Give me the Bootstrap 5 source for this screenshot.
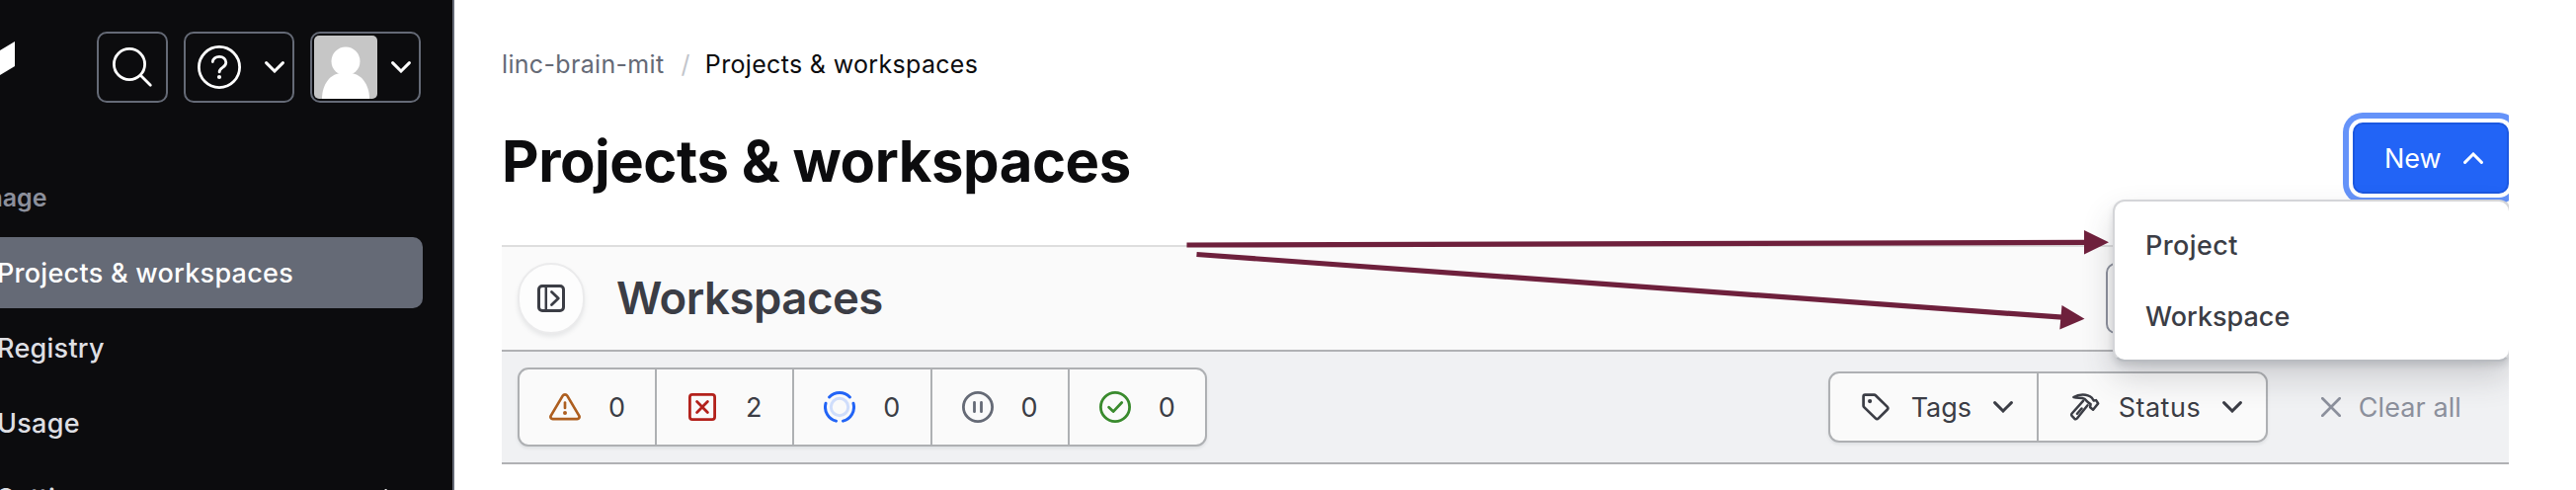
<!DOCTYPE html>
<html lang="en" data-bs-theme="light">
<head>
<meta charset="utf-8">
<title>Projects &amp; workspaces</title>
<link href="https://cdn.jsdelivr.net/npm/bootstrap@5.3.0/dist/css/bootstrap.min.css" rel="stylesheet">
<style>
  body { font-family: Inter, "Liberation Sans", sans-serif; font-size: 27px; line-height: 40px; color: #3b3d45; background: #fff; width: 2608px; height: 496px; overflow: hidden; }
  svg { display: block; flex: none; }
  .side { width: 460px; height: 496px; background: #0c0c0e; border-right: 2px solid #656a76; overflow: hidden; }
  .side-top { padding: 32px 32px 0 0; gap: 16px; }
  .side-btn { height: 72px; border: 2px solid #656a76; border-radius: 10px; color: #fff; }
  .side-label { margin: 76px 0 19px -50px; color: #8c909c; font-size: 25px; font-weight: 600; height: 41px; }
  .side-nav { gap: 4px; padding-right: 30px; }
  .side-item { height: 72px; color: #dedfe3; font-weight: 500; letter-spacing: .27px; border-radius: 0 10px 10px 0; }
  .side-item span { margin-left: -3px; padding-top: 1px; }
  .side-item.current { background: #656a76; color: #fff; }
  .page { width: 2032px; margin-left: 48px; height: 496px; overflow: hidden; }
  .crumbs { height: 40px; margin: 45px 0 0; font-size: 25px; letter-spacing: .33px; color: #0c0c0e; }
  .crumbs a { color: #656a76; text-decoration: none; }
  .crumbs i { color: #c2c5cb; font-style: normal; margin: 0 15px 0 17px; }
  .head-row { height: 72px; margin-top: 39px; }
  .head-row h1 { font-size: 58px; font-weight: 700; letter-spacing: -.45px; color: #0c0c0e; line-height: 72px; margin: 3px 0 0; }
  .new-btn { width: 158px; height: 72px; background: #2264f6; border: 2px solid #1c58e0; border-radius: 10px; color: #fff; padding: 0 24px 0 30px; box-shadow: 0 0 0 4px #fff, 0 0 0 10px #6593f9; }
  .new-btn span { padding-top: 1px; }
  .menu { top: 78px; right: -2px; width: 403px; height: 164px; background: #fff; border: 2px solid #d4d5d8; border-bottom-color: #b9bcc1; border-radius: 12px; padding: 8px 0; box-shadow: 0 4px 6px rgba(59,61,69,.14), 0 16px 32px rgba(59,61,69,.2); z-index: 3; font-weight: 500; }
  .menu a { height: 72px; padding: 2px 0 0 31px; color: #3b3d45; text-decoration: none; }
  .title-bar { margin-top: 52px; height: 106px; background: #fafafa; border-top: 2px solid #dedede; padding-left: 16px; }
  .title-bar h2 { font-size: 45.5px; font-weight: 600; letter-spacing: -.5px; margin: -1px 0 0 32px; line-height: 56px; }
  .round-btn { width: 68px; height: 72px; border: 2px solid #ebebec; border-radius: 36px; background: #fdfdfd; box-shadow: 0 3px 4px rgba(101,106,118,.12); }
  .ghost-btn { width: 390px; height: 72px; border: 2px solid #8c909c; border-radius: 10px; background: #fafafa; margin-right: 18px; }
  .filters { height: 116px; background: #f0f1f3; border-top: 2px solid #b0b1b4; border-bottom: 2px solid #b0b1b4; padding: 0 48px 0 16px; }
  .filters span { padding-top: 1px; }
  .segs { border: 2px solid #aeb0b3; border-radius: 11px; background: #fafafa; box-shadow: 0 2px 3px rgba(101,106,118,.12); }
  .segs > div + div { border-left: 2px solid #aeb0b3; }
  .states { width: 698px; height: 80px; }
  .states > div { flex: 0 0 137px; padding-left: 30px; gap: 28px; }
  .states > div + div { flex: 1 1 0; }
  .drops { height: 72px; }
  .clear-all { color: #8c909c; margin-left: 54px; gap: 18px; letter-spacing: .1px; }
  .arrows { left: 0; top: 0; z-index: 5; pointer-events: none; }
</style>
</head>
<body class="d-flex position-relative">
<svg width="0" height="0" class="position-absolute"><defs>
  <symbol id="chev" viewBox="0 0 20 12"><path d="M1.6 1.6 10 10 18.4 1.6" fill="none" stroke="currentColor" stroke-width="3" stroke-linecap="round"/></symbol>
</defs></svg>

<aside class="side flex-shrink-0 d-flex flex-column">
  <div class="side-top d-flex align-items-center flex-shrink-0">
    <svg width="15" height="54" viewBox="0 0 15 54" class="me-auto"><path d="M0 10 15 1V26L0 35Z" fill="#fff"/></svg>
    <div class="side-btn d-flex align-items-center justify-content-center" style="width:72px">
      <svg width="42" height="42" viewBox="0 0 42 42" fill="none" stroke="#fff" stroke-width="2.8" stroke-linecap="round"><circle cx="18" cy="18" r="15.6"/><path d="m29.3 29.3 10 10"/></svg>
    </div>
    <div class="side-btn d-flex align-items-center" style="width:112px">
      <svg style="margin-left:12px" width="44" height="44" viewBox="0 0 44 44" fill="none" stroke="#fff" stroke-width="2.8" stroke-linecap="round"><circle cx="22" cy="22" r="20.6"/><path d="M15.300 16.600c0-3 3-5.300 6.800-5.300s6.700 2.700 6.700 6c0 5.600-6.700 4.600-6.700 9.600"/><circle cx="22" cy="32" r="2.100" fill="#fff" stroke="none"/></svg>
      <svg width="20" height="12" class="ms-4"><use href="#chev"/></svg>
    </div>
    <div class="side-btn d-flex align-items-center" style="width:112px">
      <svg style="margin-left:2px" width="64" height="64" viewBox="0 0 64 64"><defs><clipPath id="av"><rect width="64" height="64" rx="5"/></clipPath></defs><g clip-path="url(#av)"><rect width="64" height="64" fill="#c6c6c6"/><circle cx="32" cy="26" r="14.500" fill="#fff"/><path d="M8 64C8 49 17 38.500 26 38.500h12C47 38.500 56 49 56 64Z" fill="#fff"/></g></svg>
      <svg width="20" height="12" style="margin-left:14px"><use href="#chev"/></svg>
    </div>
  </div>
  <div class="side-label flex-shrink-0">Manage</div>
  <nav class="side-nav d-flex flex-column">
    <div class="side-item current d-flex align-items-center"><span>Projects &amp; workspaces</span></div>
    <div class="side-item d-flex align-items-center"><span>Registry</span></div>
    <div class="side-item d-flex align-items-center"><span>Usage</span></div>
    <div class="side-item d-flex align-items-center justify-content-between"><span>Settings</span><svg width="12" height="20" viewBox="0 0 12 20" style="margin-right:27px;margin-top:1px"><path d="m1.600 1.600 8.400 8.400-8.400 8.400" fill="none" stroke="#fff" stroke-width="3" stroke-linecap="round"/></svg></div>
  </nav>
</aside>

<main class="page">
  <div class="crumbs d-flex align-items-center"><a href="#">linc-brain-mit</a><i>/</i><span>Projects &amp; workspaces</span></div>
  <div class="head-row d-flex justify-content-between position-relative">
    <h1>Projects &amp; workspaces</h1>
    <div class="new-btn d-flex align-items-center justify-content-between"><span>New</span><svg width="20" height="12" style="transform:rotate(180deg)"><use href="#chev"/></svg></div>
    <div class="menu position-absolute">
      <a href="#" class="d-flex align-items-center" style="letter-spacing:.4px">Project</a>
      <a href="#" class="d-flex align-items-center">Workspace</a>
    </div>
  </div>

  <div class="title-bar d-flex align-items-center">
    <div class="round-btn d-flex align-items-center justify-content-center">
      <svg width="28" height="28" viewBox="0 0 28 28" fill="none" stroke="#3b3d45" stroke-width="3" stroke-linecap="round" stroke-linejoin="round"><rect x="1.500" y="1.500" width="25" height="25" rx="3.500"/><path d="M8.800 2v24" stroke-width="2.500"/><path d="m14.500 7.500 6.800 6.500-6.800 6.500" stroke-width="2.800"/></svg>
    </div>
    <h2>Workspaces</h2>
    <div class="ghost-btn ms-auto"></div>
  </div>

  <div class="filters d-flex align-items-center justify-content-between">
    <div class="segs states d-flex">
      <div class="d-flex align-items-center"><svg width="32" height="32" viewBox="0 0 32 32" fill="none" stroke="#ad5e1f" stroke-width="2.700" stroke-linecap="round" stroke-linejoin="round"><path d="M13.700 4.600a2.700 2.700 0 0 1 4.600 0l12 20.300c.8 1.500-.2 3.200-1.900 3.200H3.600c-1.700 0-2.700-1.700-1.900-3.200Z"/><path d="M16 11.600v5.300"/><circle cx="16" cy="22" r="2" fill="#ad5e1f" stroke="none"/></svg><span>0</span></div>
      <div class="d-flex align-items-center"><svg width="32" height="32" viewBox="0 0 32 32" fill="none" stroke="#b3211b" stroke-width="2.800" stroke-linecap="round"><rect x="3.400" y="3.400" width="25.200" height="25.200" rx="2.600"/><path d="m10.600 10.600 10.800 10.800M21.400 10.600 10.600 21.400"/></svg><span>2</span></div>
      <div class="d-flex align-items-center"><svg width="32" height="32" viewBox="0 0 32 32" fill="none" stroke="#2264f6" stroke-width="3" stroke-linecap="round"><circle cx="16" cy="16" r="8.700" stroke="#cfddfb"/><path d="M5.600 6A14.500 14.500 0 0 1 26.400 6M30 12.300A14.500 14.500 0 0 1 19.500 30.100M12.500 30.100A14.500 14.500 0 0 1 2 12.300"/></svg><span>0</span></div>
      <div class="d-flex align-items-center"><svg width="32" height="32" viewBox="0 0 32 32" fill="none" stroke="#656a76" stroke-width="2.800" stroke-linecap="round"><circle cx="16" cy="16" r="14.600"/><path d="M12.500 11.300v9.400M19.500 11.300v9.400"/></svg><span>0</span></div>
      <div class="d-flex align-items-center"><svg width="32" height="32" viewBox="0 0 32 32" fill="none" stroke="#398a2d" stroke-width="2.800" stroke-linecap="round" stroke-linejoin="round"><circle cx="16" cy="16" r="14.600"/><path d="m9.600 16.300 4.500 4.300 8.600-9.100"/></svg><span>0</span></div>
    </div>
    <div class="d-flex align-items-center">
      <div class="segs drops d-flex">
        <div class="d-flex align-items-center" style="width:209px;padding-left:32px">
          <svg width="28" height="28" viewBox="0 0 28 28" fill="none" stroke="#3b3d45" stroke-width="2.700" stroke-linejoin="round"><path d="M1.600 3.200c0-.9.700-1.600 1.600-1.600h9.300c.5 0 1 .2 1.400.6l11.700 11.400c.9.900.9 2.200 0 3.100l-8.700 8.700c-.9.900-2.200.9-3.100 0L2.200 14.100c-.4-.4-.6-.9-.6-1.400Z"/><circle cx="8.100" cy="8.100" r="2.100" fill="#3b3d45" stroke="none"/></svg>
          <span style="margin-left:22px">Tags</span><svg width="20" height="12" class="ms-auto me-4"><use href="#chev"/></svg>
        </div>
        <div class="d-flex align-items-center" style="width:232px;padding-left:32px">
          <svg width="30" height="28" viewBox="0 0 30 28" fill="none" stroke="#3b3d45" stroke-width="2.500" stroke-linejoin="round" stroke-linecap="round"><path d="M3.400 4.100C8.500.7 17 .2 21.800 4.600l2 3 2.300-.5 2.100 3.300-5.100 6.300-3-2.400.5-3.200-2.500-1.700-3.500-3.600C11 4.100 7.500 5.300 3.400 4.100Z"/><path d="M13 7.800 1.700 20.500c-.8.900-.7 2 .1 2.700l2.400 2.500c.9.800 1.900.7 2.700-.2L17.500 12.300M11.500 15.500l-4.500 5.300"/></svg>
          <span style="margin-left:19px;letter-spacing:.5px">Status</span><svg width="20" height="12" class="ms-auto me-4"><use href="#chev"/></svg>
        </div>
      </div>
      <div class="clear-all d-flex align-items-center"><svg width="20" height="20" viewBox="0 0 20 20"><path d="m1.300 1.300 17.400 17.400M18.700 1.300 1.300 18.700" stroke="#8c909c" stroke-width="2.700" stroke-linecap="round"/></svg><span>Clear all</span></div>
    </div>
  </div>
</main>

<svg class="arrows position-absolute" width="2608" height="496" viewBox="0 0 2608 496" fill="#6e203c" stroke="#6e203c">
  <path d="M1201.500 248 2112 245.300M1211.500 257.500 2088 321.200" stroke-width="5.200"/>
  <path d="M2110 233v24.500l25-12.200ZM2087.500 309l-2.200 24.500 25.200-10.800Z" stroke="none"/>
</svg>
<script src="https://cdn.jsdelivr.net/npm/bootstrap@5.3.0/dist/js/bootstrap.bundle.min.js"></script>
</body>
</html>
